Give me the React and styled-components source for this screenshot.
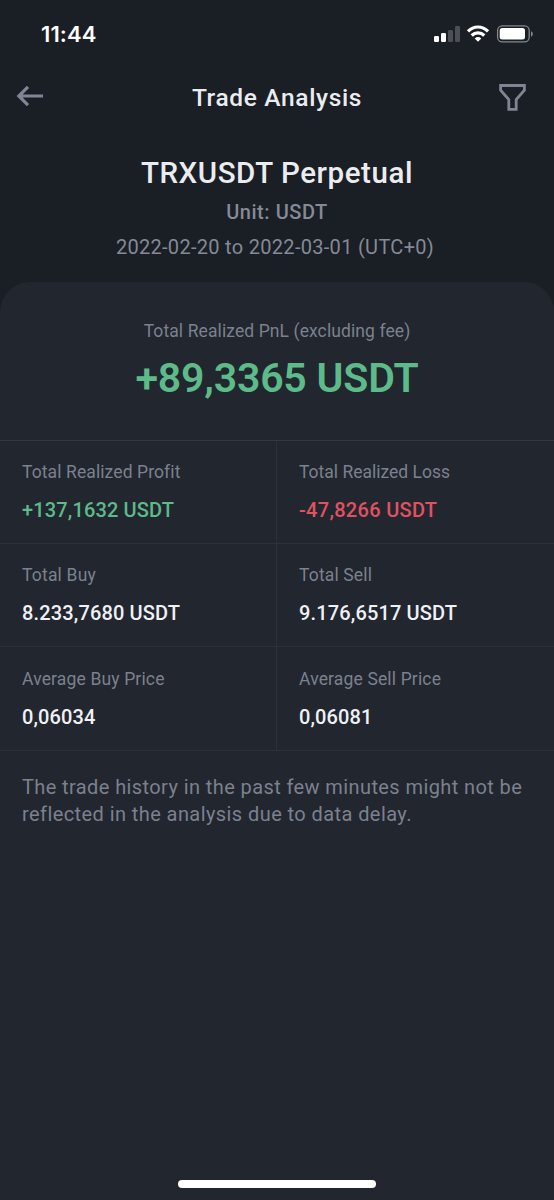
import React from 'react';
import styled, { createGlobalStyle } from 'styled-components';

const GlobalStyle = createGlobalStyle`
  * { box-sizing: border-box; }
  body {
    margin: 0;
    background: #1a1e25;
    color: #eaecef;
    font-family: Roboto, "Noto Sans", sans-serif;
  }
`;

const Screen = styled.div`
  display: flex;
  flex-direction: column;
  width: 554px;
  height: 1200px;
  overflow: hidden;
  background: #1a1e25;
`;

const StatusBar = styled.header`
  display: flex;
  justify-content: space-between;
  align-items: center;
  height: 68px;
  padding: 0 20px 0 41px;
`;

const Clock = styled.time`
  font: 600 22px/24px Inter, sans-serif;
  letter-spacing: 0.1px;
  color: #fff;
`;

const StatusIcons = styled.svg`
  display: block;
  width: 100px;
  height: 20px;
`;

const NavBar = styled.nav`
  display: grid;
  grid-template-columns: 28px 1fr 28px;
  align-items: center;
  height: 58px;
  padding: 0 27px 0 16px;
`;

const NavButton = styled.button`
  display: flex;
  padding: 0;
  border: 0;
  background: none;
  color: #7f8593;
`;

const NavTitle = styled.h1`
  margin: 2px 0 0 11px;
  text-align: center;
  font-size: 24.5px;
  line-height: 30px;
  font-weight: 500;
  letter-spacing: ${(p) => p.$tracking}px;
`;

const Summary = styled.section`
  display: flex;
  flex-direction: column;
  align-items: center;
  height: 156px;
  padding-top: 29px;
`;

const Centered = styled.div`
  font-size: ${(p) => p.$size}px;
  line-height: ${(p) => p.$line}px;
  font-weight: ${(p) => p.$weight || 400};
  letter-spacing: ${(p) => p.$tracking || 0}px;
  margin-top: ${(p) => p.$top || 0}px;
  color: ${(p) => p.$color || '#848a96'};
  white-space: nowrap;
`;

const DateRange = styled(Centered)`
  padding-right: 4px;
`;

const Panel = styled.main`
  display: flex;
  flex-direction: column;
  flex: 1;
  border-radius: 30px 30px 0 0;
  background: #22262f;
`;

const Total = styled.section`
  display: flex;
  flex-direction: column;
  align-items: center;
  height: 158px;
  padding-top: 37px;
`;

const Stats = styled.section`
  display: grid;
  grid-template-columns: 277px 277px;
  grid-template-rows: 103px 103px 104px;
  border-top: 1px solid #343941;
`;

const Cell = styled.div`
  padding: 19px 0 0 22px;
  border-bottom: 1px solid #2c3038;
  &:nth-child(odd) { border-right: 1px solid #2c3038; }
  &:nth-child(n + 5) { padding-top: 20px; }
`;

const Label = styled.div`
  font-size: 17.5px;
  line-height: 24px;
  letter-spacing: ${(p) => p.$tracking}px;
  color: #7b818d;
  white-space: nowrap;
`;

const Value = styled.div`
  margin-top: 14px;
  font-size: 20px;
  line-height: 24px;
  font-weight: 500;
  letter-spacing: ${(p) => p.$tracking}px;
  color: ${(p) => p.$color || '#eff1f5'};
  white-space: nowrap;
`;

const Note = styled.p`
  margin: 23px 0 0 22px;
  font-size: 20px;
  line-height: 27px;
  color: #7b818d;
`;

const NoteLine = styled.span`
  display: block;
  white-space: nowrap;
  letter-spacing: ${(p) => p.$tracking}px;
`;

const HomeIndicator = styled.div`
  width: 198px;
  height: 8px;
  margin: auto auto 12px;
  border-radius: 4px;
  background: #fff;
`;

const stats = [
  { label: 'Total Realized Profit', lt: 0.1, value: '+137,1632 USDT', vt: 0.15, color: '#5dba89' },
  { label: 'Total Realized Loss', lt: 0, value: '-47,8266 USDT', vt: 0.3, color: '#e15260' },
  { label: 'Total Buy', lt: 0.2, value: '8.233,7680 USDT', vt: 0.15 },
  { label: 'Total Sell', lt: 0.15, value: '9.176,6517 USDT', vt: 0.15 },
  { label: 'Average Buy Price', lt: 0.15, value: '0,06034', vt: 0.1 },
  { label: 'Average Sell Price', lt: 0.15, value: '0,06081', vt: 0.1 },
];

export default function App() {
  return (
    <Screen>
      <GlobalStyle />
      <StatusBar>
        <Clock>11:44</Clock>
        <StatusIcons viewBox="0 0 100 20" fill="none">
          <rect x="0" y="12" width="5" height="6" rx="1.3" fill="#fff" />
          <rect x="7" y="9" width="5" height="9" rx="1.3" fill="#fff" />
          <rect x="14" y="6" width="5" height="12" rx="1.3" fill="#4c4f57" />
          <rect x="21" y="2" width="5" height="16" rx="1.3" fill="#4c4f57" />
          <g stroke="#fff" strokeWidth="3.2">
            <path d="M34 7.4 C39.7 1.5 48.3 1.5 54 7.4" />
            <path d="M37.7 11.5 C41.3 7.9 46.7 7.9 50.3 11.5" />
          </g>
          <path d="M40.7 14.4 Q44 11.6 47.3 14.4 L44 17.8Z" fill="#fff" />
          <rect x="63.6" y="1.8" width="31.6" height="16" rx="4.6" stroke="#85878c" strokeWidth="1.3" />
          <rect x="65.7" y="4" width="25.3" height="11.6" rx="2.5" fill="#fff" />
          <path d="M97 7.2 C99.4 8 99.4 11.8 97 12.6Z" fill="#85878c" />
        </StatusIcons>
      </StatusBar>
      <NavBar>
        <NavButton aria-label="Back">
          <svg width="28" height="24" viewBox="0 0 28 24" fill="none" stroke="currentColor" strokeWidth="3.2">
            <path d="M27 11H3M12 1.8L2.8 11L12 20.2" />
          </svg>
        </NavButton>
        <NavTitle $tracking={0.65}>Trade Analysis</NavTitle>
        <NavButton aria-label="Filter">
          <svg width="28" height="28" viewBox="0 0 28 28" fill="none" stroke="currentColor" strokeWidth="2.8">
            <path d="M1.6 2.5H25.4V7.3L17.2 16.6V26.4H9.8V16.6L1.6 7.3Z" />
          </svg>
        </NavButton>
      </NavBar>
      <Summary>
        <Centered $size={29.5} $line={36} $weight={500} $tracking={0.57} $color="#eaecef">TRXUSDT Perpetual</Centered>
        <Centered $size={20} $line={24} $top={9} $weight={500} $tracking={0.55}>Unit: USDT</Centered>
        <DateRange $size={20} $line={24} $top={11} $tracking={0.3}>2022-02-20 to 2022-03-01 (UTC+0)</DateRange>
      </Summary>
      <Panel>
        <Total>
          <Centered $size={17.5} $line={24} $tracking={0.1} $color="#7b818d">Total Realized PnL (excluding fee)</Centered>
          <Centered $size={41} $line={48} $top={11} $weight={600} $tracking={-0.2} $color="#5dba89">+89,3365 USDT</Centered>
        </Total>
        <Stats>
          {stats.map((s) => (
            <Cell key={s.label}>
              <Label $tracking={s.lt}>{s.label}</Label>
              <Value $tracking={s.vt} $color={s.color}>{s.value}</Value>
            </Cell>
          ))}
        </Stats>
        <Note>
          <NoteLine $tracking={0.4}>The trade history in the past few minutes might not be</NoteLine>
          <NoteLine $tracking={0.42}>reflected in the analysis due to data delay.</NoteLine>
        </Note>
        <HomeIndicator />
      </Panel>
    </Screen>
  );
}
